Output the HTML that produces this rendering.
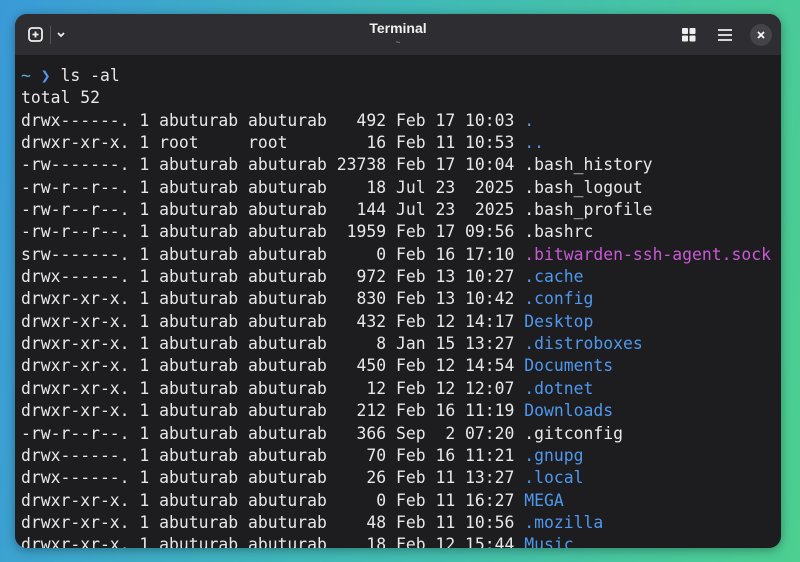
<!DOCTYPE html>
<html><head><meta charset="utf-8"><style>
html,body{margin:0;padding:0;width:800px;height:562px;overflow:hidden}
body{background:linear-gradient(100deg,#3a9ad8 0%,#40b8b8 45%,#4ccf90 100%);position:relative;font-family:"Liberation Sans",sans-serif}
.win{position:absolute;left:15px;top:14px;width:766px;height:534px;border-radius:12px;overflow:hidden;background:#1d1d20;box-shadow:0 2px 10px rgba(0,0,0,.35)}
.tb{position:absolute;left:0;top:0;width:100%;height:41px;background:#2e2e32}
.title{position:absolute;left:0;width:100%;top:6px;text-align:center;color:#f0f0f0;font-weight:bold;font-size:14px}
.sub{position:absolute;left:0;width:100%;top:24px;text-align:center;color:#aaa;font-size:8px}
pre{position:absolute;left:6px;top:51px;margin:0;font-family:"DejaVu Sans Mono","Liberation Mono",monospace;font-size:16.4px;line-height:22.35px;color:#e8e8e8;letter-spacing:0}
.b{color:#4f98ee}.m{color:#c85ad4}.t{color:#4fb5c8}
</style></head><body>
<div class="win">
<div class="tb">
<svg style="position:absolute;left:12px;top:12px" width="18" height="18" viewBox="0 0 18 18"><rect x="2" y="2" width="13" height="13" rx="3" fill="none" stroke="#eee" stroke-width="1.8"/><path d="M8.5 5.5v6M5.5 8.5h6" stroke="#eee" stroke-width="1.8"/></svg>
<div style="position:absolute;left:35px;top:12px;width:1px;height:18px;background:#555"></div>
<svg style="position:absolute;left:41px;top:17px" width="10" height="8" viewBox="0 0 10 8"><path d="M2 2l3 3 3-3" fill="none" stroke="#eee" stroke-width="1.8"/></svg>
<div class="title">Terminal</div><div class="sub">~</div>
<svg style="position:absolute;left:667px;top:14px" width="14" height="14" viewBox="0 0 14 14"><rect x="0" y="0" width="6" height="6" rx="1" fill="#eee"/><rect x="7.5" y="0" width="6" height="6" rx="1" fill="#eee"/><rect x="0" y="7.5" width="6" height="6" rx="1" fill="#eee"/><rect x="7.5" y="7.5" width="6" height="6" rx="1" fill="#eee"/></svg>
<svg style="position:absolute;left:703px;top:14px" width="14" height="14" viewBox="0 0 14 14"><path d="M0 2h14M0 7h14M0 12h14" stroke="#eee" stroke-width="1.7"/></svg>
<div style="position:absolute;left:735px;top:10px;width:22px;height:22px;border-radius:50%;background:#444448"></div>
<svg style="position:absolute;left:741px;top:16px" width="10" height="10" viewBox="0 0 10 10"><path d="M2 2l6 6M8 2l-6 6" stroke="#fff" stroke-width="1.8"/></svg>
</div>
<pre><span class="t">~</span> <span class="b">❯</span> ls -al
total 52
drwx------. 1 abuturab abuturab   492 Feb 17 10:03 <span class="b">.</span>
drwxr-xr-x. 1 root     root        16 Feb 11 10:53 <span class="b">..</span>
-rw-------. 1 abuturab abuturab 23738 Feb 17 10:04 .bash_history
-rw-r--r--. 1 abuturab abuturab    18 Jul 23  2025 .bash_logout
-rw-r--r--. 1 abuturab abuturab   144 Jul 23  2025 .bash_profile
-rw-r--r--. 1 abuturab abuturab  1959 Feb 17 09:56 .bashrc
srw-------. 1 abuturab abuturab     0 Feb 16 17:10 <span class="m">.bitwarden-ssh-agent.sock</span>
drwx------. 1 abuturab abuturab   972 Feb 13 10:27 <span class="b">.cache</span>
drwxr-xr-x. 1 abuturab abuturab   830 Feb 13 10:42 <span class="b">.config</span>
drwxr-xr-x. 1 abuturab abuturab   432 Feb 12 14:17 <span class="b">Desktop</span>
drwxr-xr-x. 1 abuturab abuturab     8 Jan 15 13:27 <span class="b">.distroboxes</span>
drwxr-xr-x. 1 abuturab abuturab   450 Feb 12 14:54 <span class="b">Documents</span>
drwxr-xr-x. 1 abuturab abuturab    12 Feb 12 12:07 <span class="b">.dotnet</span>
drwxr-xr-x. 1 abuturab abuturab   212 Feb 16 11:19 <span class="b">Downloads</span>
-rw-r--r--. 1 abuturab abuturab   366 Sep  2 07:20 .gitconfig
drwx------. 1 abuturab abuturab    70 Feb 16 11:21 <span class="b">.gnupg</span>
drwx------. 1 abuturab abuturab    26 Feb 11 13:27 <span class="b">.local</span>
drwxr-xr-x. 1 abuturab abuturab     0 Feb 11 16:27 <span class="b">MEGA</span>
drwxr-xr-x. 1 abuturab abuturab    48 Feb 11 10:56 <span class="b">.mozilla</span>
drwxr-xr-x. 1 abuturab abuturab    18 Feb 12 15:44 <span class="b">Music</span></pre>
</div>
</body></html>
